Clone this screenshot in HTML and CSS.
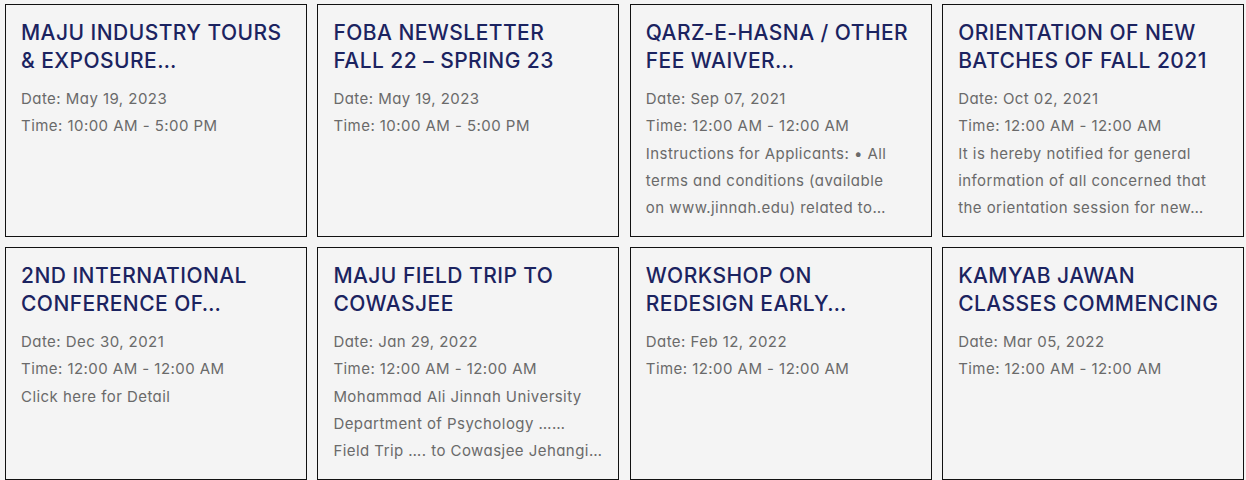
FILE: index.html
```html
<!DOCTYPE html>
<html lang="en">
<head>
<meta charset="utf-8">
<title>Events</title>
<link rel="stylesheet" href="styles.css">
</head>
<body>
<div class="events">
  <div class="card">
    <h3 class="title">MAJU INDUSTRY TOURS<br>&amp; EXPOSURE…</h3>
    <p class="meta">Date: May 19, 2023</p>
    <p class="meta">Time: 10:00 AM - 5:00 PM</p>
  </div>
  <div class="card">
    <h3 class="title">FOBA NEWSLETTER<br>FALL 22 – SPRING 23</h3>
    <p class="meta">Date: May 19, 2023</p>
    <p class="meta">Time: 10:00 AM - 5:00 PM</p>
  </div>
  <div class="card">
    <h3 class="title">QARZ-E-HASNA / OTHER<br>FEE WAIVER…</h3>
    <p class="meta">Date: Sep 07, 2021</p>
    <p class="meta">Time: 12:00 AM - 12:00 AM</p>
    <p class="desc">Instructions for Applicants: • All<br>terms and conditions (available<br>on www.jinnah.edu) related to…</p>
  </div>
  <div class="card">
    <h3 class="title">ORIENTATION OF NEW<br>BATCHES OF FALL 2021</h3>
    <p class="meta">Date: Oct 02, 2021</p>
    <p class="meta">Time: 12:00 AM - 12:00 AM</p>
    <p class="desc">It is hereby notified for general<br>information of all concerned that<br>the orientation session for new…</p>
  </div>
  <div class="card">
    <h3 class="title">2ND INTERNATIONAL<br>CONFERENCE OF…</h3>
    <p class="meta">Date: Dec 30, 2021</p>
    <p class="meta">Time: 12:00 AM - 12:00 AM</p>
    <p class="desc">Click here for Detail</p>
  </div>
  <div class="card">
    <h3 class="title">MAJU FIELD TRIP TO<br>COWASJEE</h3>
    <p class="meta">Date: Jan 29, 2022</p>
    <p class="meta">Time: 12:00 AM - 12:00 AM</p>
    <p class="desc">Mohammad Ali Jinnah University<br>Department of Psychology ……<br>Field Trip …. to Cowasjee Jehangi…</p>
  </div>
  <div class="card">
    <h3 class="title">WORKSHOP ON<br>REDESIGN EARLY…</h3>
    <p class="meta">Date: Feb 12, 2022</p>
    <p class="meta">Time: 12:00 AM - 12:00 AM</p>
  </div>
  <div class="card">
    <h3 class="title">KAMYAB JAWAN<br>CLASSES COMMENCING</h3>
    <p class="meta">Date: Mar 05, 2022</p>
    <p class="meta">Time: 12:00 AM - 12:00 AM</p>
  </div>
</div>
</body>
</html>
```
FILE: styles.css
```css
html, body {
  margin: 0;
  padding: 0;
  background: #f4f4f4;
}
body {
  font-family: "Inter", "Noto Sans", sans-serif;
  font-feature-settings: "cv11" 1;
}
.events {
  display: grid;
  grid-template-columns: repeat(4, 1fr);
  column-gap: 10.5px;
  row-gap: 10px;
  padding: 4px 2px 0 5px;
}
.card {
  background: #f4f4f4;
  border: 1px solid #111;
  padding: 14px 15px 14px 15px;
  min-height: 203px;
}
.title {
  margin: 0 0 10px 0;
  font-size: 21px;
  line-height: 28px;
  font-weight: 500;
  letter-spacing: 0.45px;
  color: #1b2360;
  white-space: nowrap;
}
.meta, .desc {
  margin: 0;
  font-size: 15px;
  line-height: 27.25px;
  letter-spacing: 0.45px;
  color: #6a6a6a;
  white-space: nowrap;
}
```
